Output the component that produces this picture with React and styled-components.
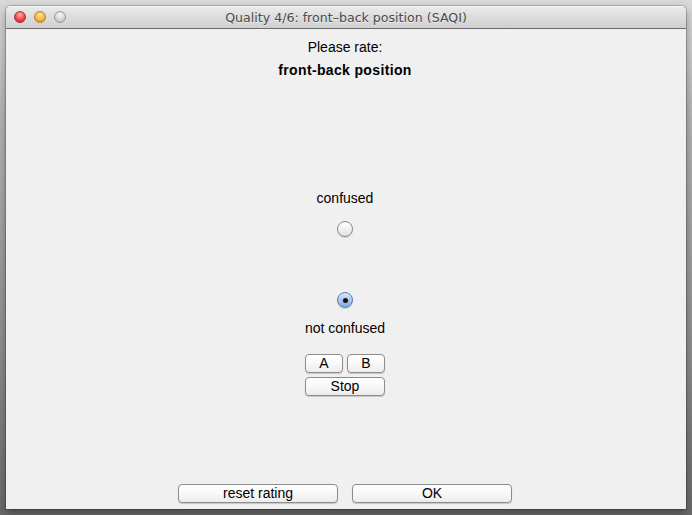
import React from "react";
import styled, { createGlobalStyle } from "styled-components";

const Global = createGlobalStyle`
  html, body { margin: 0; padding: 0; }
  body {
    width: 692px;
    height: 515px;
    overflow: hidden;
    background: linear-gradient(to bottom, #d9d9d9 0px, #b4b4b4 120px, #8e8e8e 350px, #6a6a6a 515px);
    font-family: "Liberation Sans", Arial, sans-serif;
  }
`;

const Desktop = styled.div`
  padding: 6px 6px 0 6px;
  height: 515px;
  box-sizing: border-box;
`;

const Window = styled.div`
  width: 680px;
  height: 503px;
  display: flex;
  flex-direction: column;
  background: #f0f0f0;
  border-radius: 5px 5px 0 0;
  box-shadow: 0 0 0 1px rgba(0,0,0,0.18), 0 4px 10px rgba(0,0,0,0.35);
  overflow: hidden;
`;

const TitleBar = styled.div`
  height: 22px;
  flex: none;
  position: relative;
  display: flex;
  align-items: center;
  justify-content: center;
  background: linear-gradient(to bottom, #ececec 0%, #dddddd 50%, #cfcfcf 100%);
  border-bottom: 1px solid #6b6b6b;
  box-shadow: inset 0 1px 0 #f8f8f8;
`;

const Lights = styled.div`
  position: absolute;
  left: 8px;
  top: 5px;
  display: flex;
  gap: 8px;
`;

const Light = styled.span`
  width: 12px;
  height: 12px;
  border-radius: 50%;
  box-sizing: border-box;
  border: 1px solid ${p => p.$edge};
  background: radial-gradient(circle at 50% 30%, ${p => p.$hi} 0%, ${p => p.$mid} 55%, ${p => p.$lo} 100%);
`;

const Title = styled.div`
  font-family: "DejaVu Sans", "Liberation Sans", sans-serif;
  font-size: 12.6px;
  color: #4a4a4a;
  text-shadow: 0 1px 0 rgba(255,255,255,0.6);
`;

const Content = styled.div`
  flex: 1;
  display: flex;
  flex-direction: column;
  align-items: center;
  padding: 10px 2px 6px 0;
`;

const Label = styled.div`
  font-size: 14px;
  line-height: 17px;
  color: #000;
  font-weight: ${p => (p.$bold ? 700 : 400)};
  letter-spacing: ${p => (p.$bold ? "0.35px" : "0")};
  margin-top: ${p => p.$mt || 0}px;
`;

const Radio = styled.span`
  width: 16px;
  height: 16px;
  box-sizing: border-box;
  border-radius: 50%;
  margin-top: ${p => p.$mt || 0}px;
  display: flex;
  align-items: center;
  justify-content: center;
  border: 1px solid ${p => (p.$checked ? "#5b7fae" : "#8a8a8a")};
  background: ${p =>
    p.$checked
      ? "linear-gradient(to bottom, #d8e7f8 0%, #a9c8ef 50%, #7fabe3 100%)"
      : "linear-gradient(to bottom, #ffffff 0%, #f2f2f2 50%, #dedede 100%)"};
  box-shadow: 0 1px 1px rgba(0,0,0,0.15);
  &::after {
    content: "";
    display: ${p => (p.$checked ? "block" : "none")};
    width: 5px;
    height: 5px;
    border-radius: 50%;
    background: #111;
  }
`;

const Row = styled.div`
  display: flex;
  gap: ${p => p.$gap || 4}px;
  margin-top: ${p => p.$mt || 0}px;
`;

const Button = styled.button`
  width: ${p => p.$w}px;
  height: 19px;
  box-sizing: border-box;
  padding: 0 0 1px;
  margin: 0;
  border: 1px solid #8c8c8c;
  border-radius: 4px;
  background: linear-gradient(to bottom, #ffffff 0%, #f8f8f8 50%, #ececec 100%);
  box-shadow: 0 1px 1px rgba(0,0,0,0.18);
  font-family: "Liberation Sans", Arial, sans-serif;
  font-size: 14px;
  line-height: 16px;
  color: #000;
`;

const Spacer = styled.div`
  flex: 1;
`;

export default function App() {
  return (
    <>
      <Global />
      <Desktop>
        <Window>
          <TitleBar>
            <Lights>
              <Light $edge="#b03030" $hi="#ffb0b0" $mid="#f04848" $lo="#b81c1c" />
              <Light $edge="#b88020" $hi="#ffe3a0" $mid="#f5b840" $lo="#c88418" />
              <Light $edge="#9a9a9a" $hi="#f8f8f8" $mid="#d6d6d6" $lo="#b0b0b0" />
            </Lights>
            <Title>Quality 4/6: front–back position (SAQI)</Title>
          </TitleBar>
          <Content>
            <Label>Please rate:</Label>
            <Label $bold $mt={6}>front-back position</Label>
            <Label $mt={111}>confused</Label>
            <Radio $mt={14} />
            <Radio $checked $mt={55} />
            <Label $mt={12}>not confused</Label>
            <Row $mt={17}>
              <Button $w={38}>A</Button>
              <Button $w={38}>B</Button>
            </Row>
            <Row $mt={4}>
              <Button $w={80}>Stop</Button>
            </Row>
            <Spacer />
            <Row $gap={14}>
              <Button $w={160}>reset rating</Button>
              <Button $w={160}>OK</Button>
            </Row>
          </Content>
        </Window>
      </Desktop>
    </>
  );
}
